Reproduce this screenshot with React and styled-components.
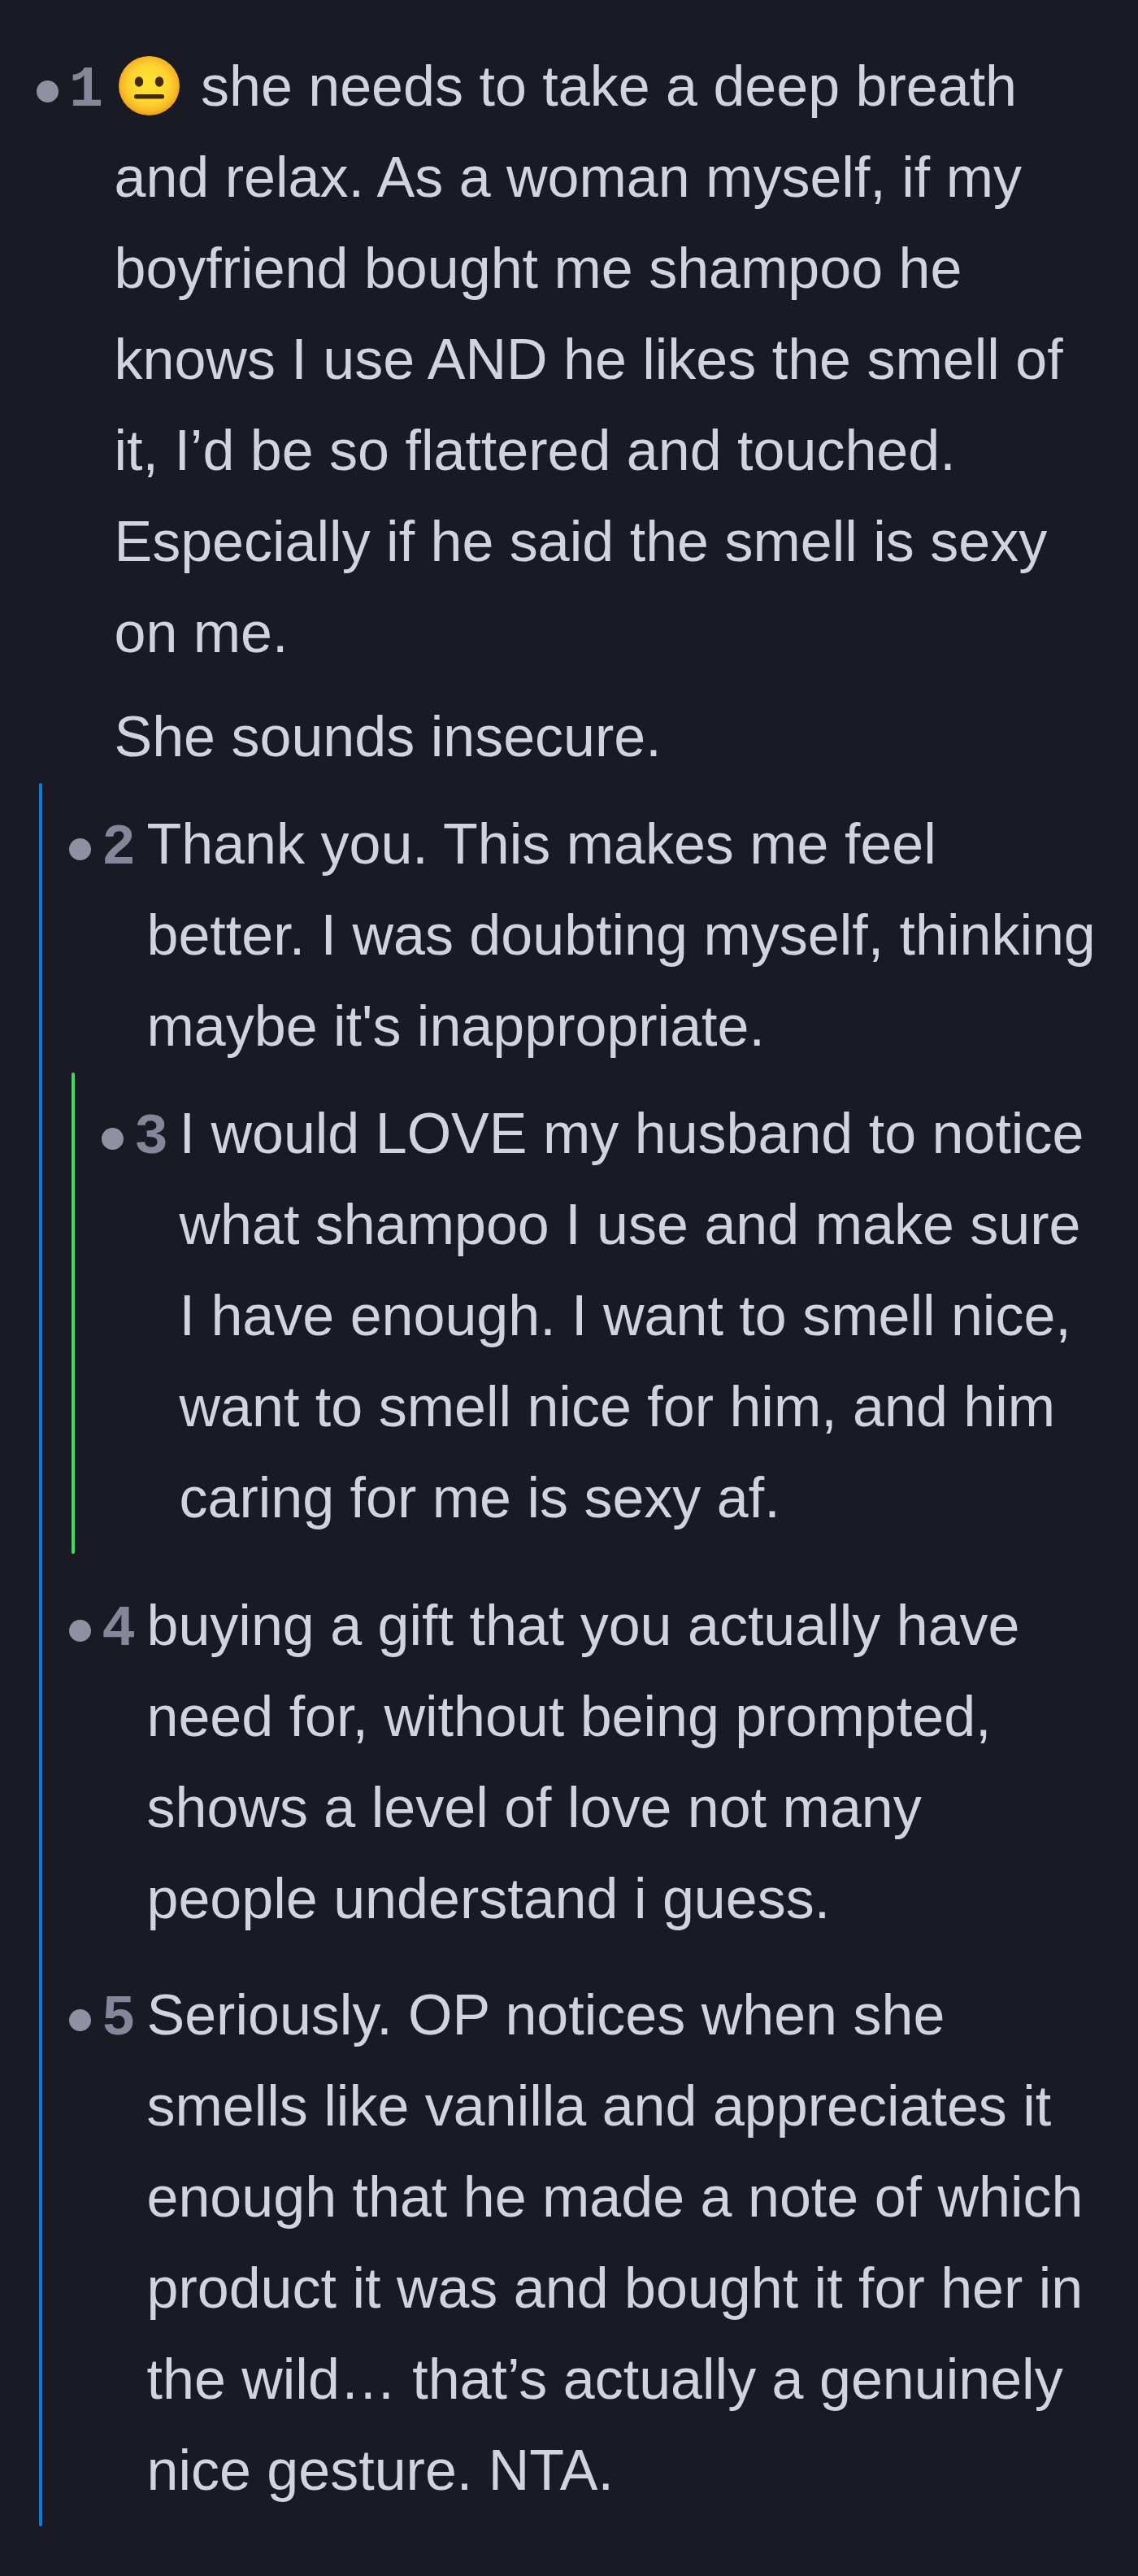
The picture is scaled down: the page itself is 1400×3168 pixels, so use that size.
import React from 'react';
import styled, { createGlobalStyle } from 'styled-components';

const GlobalStyle = createGlobalStyle`
  html, body {
    margin: 0;
    padding: 0;
    background: #1a1a24;
  }
`;

const Page = styled.div`
  box-sizing: border-box;
  min-height: 3168px;
  padding: 50px 40px 0 45px;
  background: #1a1a24;
  color: #d2d2e0;
  font-family: "Liberation Sans", Arial, sans-serif;
  font-size: 70px;
  line-height: 112px;
`;

const Thread = styled.ul`
  position: relative;
  list-style: none;
  margin: 0 0 0 3px;
  padding: 20px 0 13px 37px;

  &::before {
    content: "";
    position: absolute;
    left: 0;
    top: 1px;
    bottom: 0;
    width: 4px;
    border-radius: 2px;
    background: ${(p) => p.$color};
  }

  & > li + li {
    margin-top: 31.5px;
  }
`;

const Row = styled.div`
  display: flex;
  align-items: baseline;
`;

const Marker = styled.div`
  flex: none;
  width: 95.5px;
  display: flex;
  align-items: baseline;
`;

const Bullet = styled.span`
  flex: none;
  align-self: flex-start;
  width: 27px;
  height: 27px;
  margin-top: 43px;
  border-radius: 50%;
  background: #9090a2;
`;

const Num = styled.span`
  margin-left: 13px;
  font-family: "Liberation Mono", monospace;
  font-weight: 700;
  font-size: 70px;
  color: #86869a;
`;

const Body = styled.div`
  flex: 1;
  min-width: 0;
`;

const Para = styled.p`
  margin: 0;

  & + & {
    margin-top: 16px;
  }
`;

const EmojiSvg = styled.svg`
  width: 75px;
  height: 73px;
  margin: 0 7px 0 5px;
  vertical-align: -12px;
`;

function NeutralFace() {
  return (
    <EmojiSvg viewBox="0 0 75 73" role="img" aria-label="😐">
      <defs>
        <radialGradient id="face" cx="50%" cy="48%" r="52%">
          <stop offset="0%" stopColor="#fee133" />
          <stop offset="62%" stopColor="#fed52f" />
          <stop offset="88%" stopColor="#f8b626" />
          <stop offset="100%" stopColor="#ee9a1c" />
        </radialGradient>
      </defs>
      <ellipse cx="37.5" cy="36.5" rx="37.5" ry="36.5" fill="url(#face)" />
      <ellipse cx="25" cy="31.5" rx="5.2" ry="6.2" fill="#422b0d" />
      <ellipse cx="50" cy="31.5" rx="5.2" ry="6.2" fill="#422b0d" />
      <rect x="19" y="47" width="37" height="5.5" rx="2.5" fill="#422b0d" />
    </EmojiSvg>
  );
}

function Comment({ num, children, replies }) {
  return (
    <li>
      <Row>
        <Marker>
          <Bullet />
          <Num>{num}</Num>
        </Marker>
        <Body>{children}</Body>
      </Row>
      {replies}
    </li>
  );
}

const TopList = styled.ul`
  list-style: none;
  margin: 0;
  padding: 0;
`;

export default function App() {
  return (
    <>
      <GlobalStyle />
      <Page>
        <TopList>
          <Comment
            num="1"
            replies={
              <Thread $color="#0a7cdc">
                <Comment
                  num="2"
                  replies={
                    <Thread $color="#3ddb60">
                      <Comment num="3">
                        <Para>I would LOVE my husband to notice what shampoo I use and make sure I have enough. I want to smell nice, want to smell nice for him, and him caring for me is sexy af.</Para>
                      </Comment>
                    </Thread>
                  }
                >
                  <Para>Thank you. This makes me feel better. I was doubting myself, thinking maybe it's inappropriate.</Para>
                </Comment>
                <Comment num="4">
                  <Para>buying a gift that you actually have need for, without being prompted, shows a level of love not many people understand i guess.</Para>
                </Comment>
                <Comment num="5">
                  <Para>Seriously. OP notices when she smells like vanilla and appreciates it enough that he made a note of which product it was and bought it for her in the wild… that’s actually a genuinely nice gesture. NTA.</Para>
                </Comment>
              </Thread>
            }
          >
            <Para>
              <NeutralFace /> she needs to take a deep breath and relax. As a woman myself, if my boyfriend bought me shampoo he knows I use AND he likes the smell of it, I’d be so flattered and touched. Especially if he said the smell is sexy on me.
            </Para>
            <Para>She sounds insecure.</Para>
          </Comment>
        </TopList>
      </Page>
    </>
  );
}
